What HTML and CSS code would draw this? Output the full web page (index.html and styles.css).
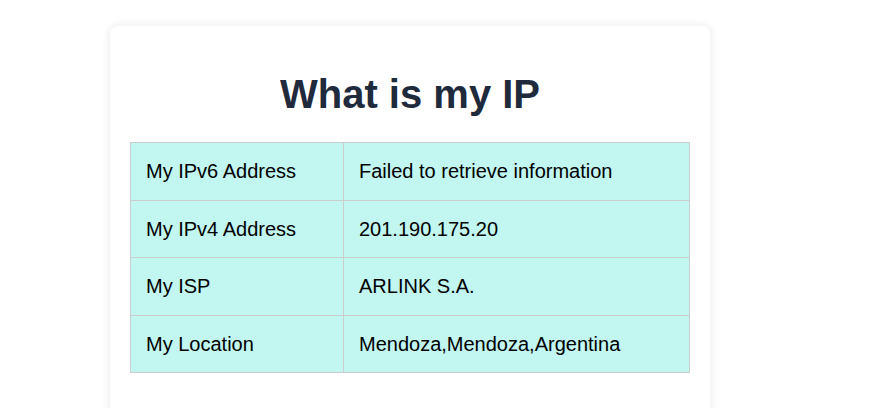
FILE: index.html
```html
<!DOCTYPE html>
<html>
<head>
<meta charset="utf-8">
<title>What is my IP</title>
<link rel="stylesheet" href="styles.css">
</head>
<body>
<div class="page">
  <main class="card">
    <h1 class="title">What is my IP</h1>
    <table class="info">
      <tbody>
        <tr><td class="label">My IPv6 Address</td><td>Failed to retrieve information</td></tr>
        <tr><td class="label">My IPv4 Address</td><td>201.190.175.20</td></tr>
        <tr><td class="label">My ISP</td><td>ARLINK S.A.</td></tr>
        <tr><td class="label">My Location</td><td>Mendoza,Mendoza,Argentina</td></tr>
      </tbody>
    </table>
  </main>
</div>
</body>
</html>
```

FILE: styles.css
```css
html, body {
  margin: 0;
  padding: 0;
  background: #ffffff;
  font-family: "Liberation Sans", Arial, sans-serif;
}
.page {
  padding: 26px 0 0 110px;
}
.card {
  width: 560px;
  padding: 20px 20px 60px;
  background: #ffffff;
  border-radius: 8px;
  box-shadow: 0 0 10px rgba(0, 0, 0, 0.1);
}
.title {
  margin: 25px 0;
  text-align: center;
  font-size: 40px;
  font-weight: bold;
  color: #1f2a3c;
  line-height: 46px;
}
.info {
  width: 100%;
  border-collapse: collapse;
  background: #c1f6f1;
}
.info td {
  border: 1px solid #cccccc;
  padding: 17px 15px;
  font-size: 20px;
  line-height: 22.5px;
  color: #000000;
  text-align: left;
}
.info .label {
  width: 182px;
}
```
